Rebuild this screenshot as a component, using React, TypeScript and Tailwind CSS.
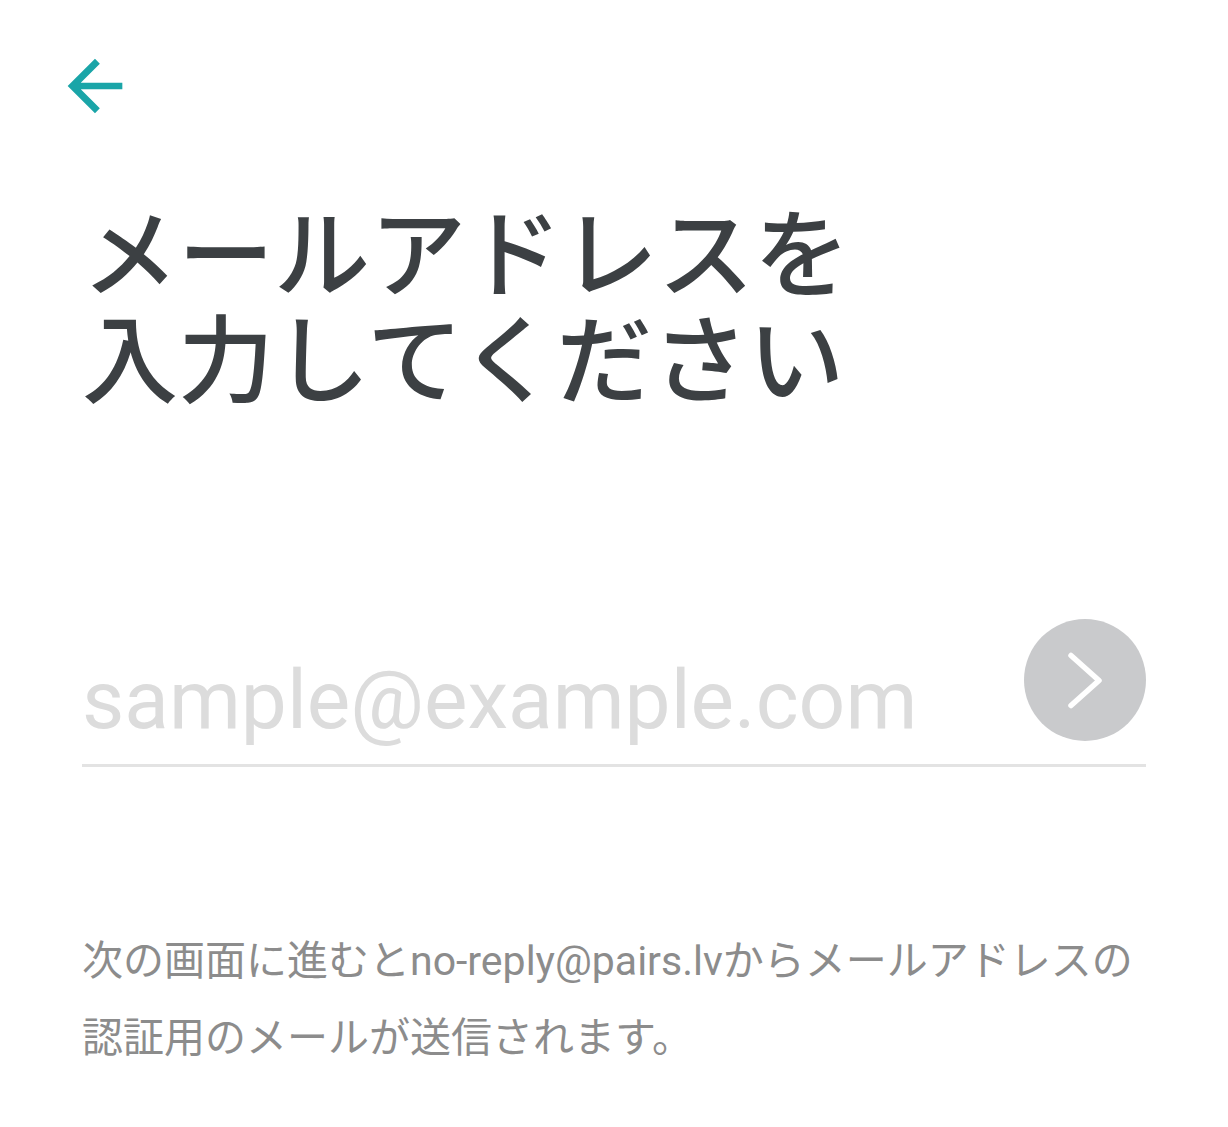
export default function App() {
  return (
    <div className="min-h-screen w-full bg-white font-['Roboto','Noto_Sans_CJK_JP',sans-serif]">
      <header className="flex h-[195px] items-start pl-[54px] pt-[45px]">
        <button aria-label="戻る" className="text-[#1aa5a8]">
          <svg viewBox="0 0 24 24" className="h-[82px] w-[82px]" fill="currentColor">
            <path d="M20 11.05H7.83l5.59-5.59L12 4l-8 8 8 8 1.41-1.46L7.83 12.95H20z" />
          </svg>
        </button>
      </header>

      <main className="px-[82px]">
        <h1 className="font-['Noto_Sans_CJK_JP',sans-serif] text-[96px] font-medium leading-[106px] text-[#3c4043]">
          メールアドレスを
          <br />
          入力してください
        </h1>

        <div className="mt-[217px] flex items-center border-b-[3px] border-[#e3e3e3] pb-[16px]">
          <input
            type="email"
            placeholder="sample@example.com"
            className="min-w-0 flex-1 bg-transparent pt-[28px] font-['Roboto',sans-serif] text-[82px] leading-[96px] text-[#3c4043] outline-none placeholder:text-[#dcdcdc]"
          />
          <button
            aria-label="次へ"
            className="flex h-[122px] w-[122px] shrink-0 -translate-y-[6px] items-center justify-center rounded-full bg-[#c9cacc]"
          >
            <svg viewBox="0 0 36 57" className="h-[57px] w-[36px]" fill="none" stroke="white" strokeWidth="5.5" strokeLinecap="round" strokeLinejoin="round">
              <path d="M4 3.5L32 28.5L4 53.5" />
            </svg>
          </button>
        </div>

        <p className="mt-[156px] font-['Roboto','Noto_Sans_CJK_JP',sans-serif] text-[41px] leading-[77px] text-[#8c8c8c]">
          次の画面に進むとno-reply@pairs.lvからメールアドレスの
          <br />
          認証用のメールが送信されます。
        </p>
      </main>
    </div>
  );
}
